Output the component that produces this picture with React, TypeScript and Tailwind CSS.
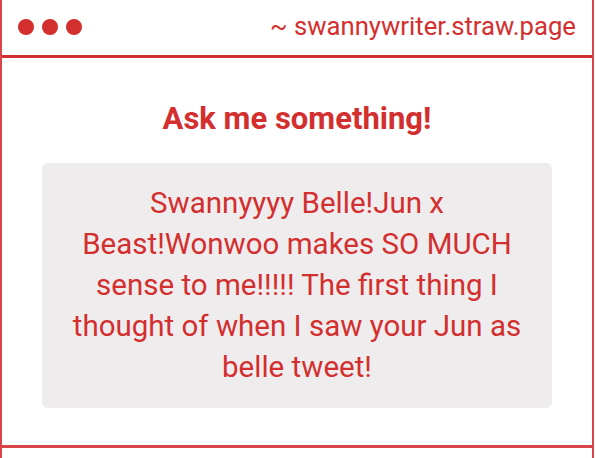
export default function App() {
  return (
    <div
      className="w-[594px] h-[458px] bg-white border-x-2 border-[#d8464b] flex flex-col overflow-hidden"
      style={{ fontFamily: "Roboto, 'Noto Sans', sans-serif" }}
    >
      {/* Header */}
      <div className="h-[58px] shrink-0 flex items-center justify-between pl-[16px] pr-[16px] border-b-[3px] border-[#d32f2f]">
        <div className="flex gap-[8px] mt-[-2px]">
          <span className="w-4 h-4 rounded-full bg-[#d32f2f]" />
          <span className="w-4 h-4 rounded-full bg-[#d32f2f]" />
          <span className="w-4 h-4 rounded-full bg-[#d32f2f]" />
        </div>
        <span className="text-[25.7px] leading-[30px] text-[#d32f2f] mt-[-3px]">~ swannywriter.straw.page</span>
      </div>

      {/* Body */}
      <div className="h-[390px] shrink-0 flex flex-col items-center pt-[40px] px-[40px] border-b-[3px] border-[#d8464b]">
        <h1 className="text-[31px] leading-[42px] font-bold text-[#d32f2f]">Ask me something!</h1>
        <div className="mt-[23px] w-full rounded-[6px] bg-[#eeeced] px-[24px] py-[20px] text-center text-[29.5px] leading-[41px] text-[#d32f2f]">
          Swannyyyy Belle!Jun x Beast!Wonwoo makes SO MUCH sense to me!!!!! The first thing I thought of when I saw your Jun as belle tweet!
        </div>
      </div>
      <div className="flex-1" />
    </div>
  );
}
